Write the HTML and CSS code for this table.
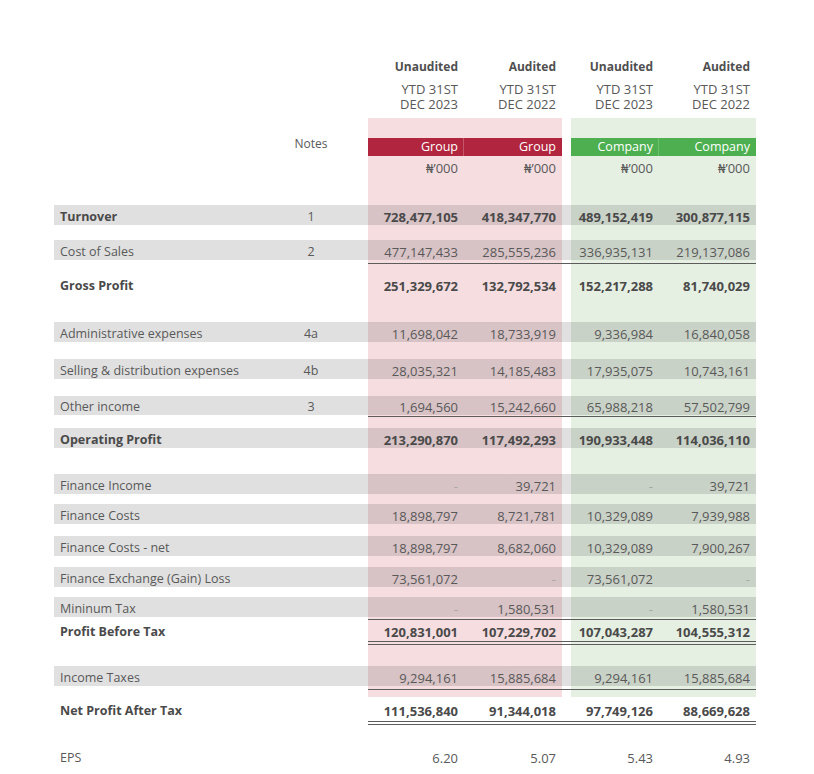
FILE: index.html
```html
<!DOCTYPE html>
<html lang="en">
<head>
<meta charset="utf-8">
<title>Statement of Profit or Loss</title>
<link rel="stylesheet" href="styles.css">
</head>
<body>
<main class="page">
<table class="fs">
  <colgroup>
    <col class="col-label"><col class="col-notes"><col class="col-n1"><col class="col-n2"><col class="col-gap"><col class="col-n3"><col class="col-n4">
  </colgroup>
  <thead>
    <tr class="h20 status"><th></th><th></th><th>Unaudited</th><th>Audited</th><th></th><th>Unaudited</th><th>Audited</th></tr>
    <tr class="h42 period"><th></th><th></th><th>YTD 31ST<br>DEC 2023</th><th>YTD 31ST<br>DEC 2022</th><th></th><th>YTD 31ST<br>DEC 2023</th><th>YTD 31ST<br>DEC 2022</th></tr>
    <tr class="h20"><th></th><th></th><th class="g"></th><th class="g"></th><th></th><th class="c"></th><th class="c"></th></tr>
    <tr class="h18 entity"><th></th><th class="notes-h">Notes</th><th class="bar-g sep">Group</th><th class="bar-g">Group</th><th></th><th class="bar-c sep">Company</th><th class="bar-c">Company</th></tr>
    <tr class="h24 unit"><th></th><th></th><th class="g">₦’000</th><th class="g">₦’000</th><th></th><th class="c">₦’000</th><th class="c">₦’000</th></tr>
  </thead>
  <tbody>
    <tr class="h25"><td></td><td></td><td class="g"></td><td class="g"></td><td></td><td class="c"></td><td class="c"></td></tr>
    <tr class="h20 row band total"><td class="lbl">Turnover</td><td class="note">1</td><td class="g">728,477,105</td><td class="g">418,347,770</td><td></td><td class="c">489,152,419</td><td class="c">300,877,115</td></tr>
    <tr class="h15"><td></td><td></td><td class="g"></td><td class="g"></td><td></td><td class="c"></td><td class="c"></td></tr>
    <tr class="h20 row band"><td class="lbl">Cost of Sales</td><td class="note">2</td><td class="g">477,147,433</td><td class="g">285,555,236</td><td></td><td class="c">336,935,131</td><td class="c">219,137,086</td></tr>
    <tr class="h3"><td></td><td></td><td class="g"></td><td class="g"></td><td></td><td class="c"></td><td class="c"></td></tr>
    <tr class="h1 line"><td></td><td></td><td></td><td></td><td></td><td></td><td></td></tr>
    <tr class="h40 row total"><td class="lbl">Gross Profit</td><td class="note"></td><td class="g">251,329,672</td><td class="g">132,792,534</td><td></td><td class="c">152,217,288</td><td class="c">81,740,029</td></tr>
    <tr class="h18"><td></td><td></td><td class="g"></td><td class="g"></td><td></td><td class="c"></td><td class="c"></td></tr>
    <tr class="h20 row band"><td class="lbl">Administrative expenses</td><td class="note">4a</td><td class="g">11,698,042</td><td class="g">18,733,919</td><td></td><td class="c">9,336,984</td><td class="c">16,840,058</td></tr>
    <tr class="h17"><td></td><td></td><td class="g"></td><td class="g"></td><td></td><td class="c"></td><td class="c"></td></tr>
    <tr class="h20 row band"><td class="lbl">Selling &amp; distribution expenses</td><td class="note">4b</td><td class="g">28,035,321</td><td class="g">14,185,483</td><td></td><td class="c">17,935,075</td><td class="c">10,743,161</td></tr>
    <tr class="h17"><td></td><td></td><td class="g"></td><td class="g"></td><td></td><td class="c"></td><td class="c"></td></tr>
    <tr class="h19 row band"><td class="lbl">Other income</td><td class="note">3</td><td class="g">1,694,560</td><td class="g">15,242,660</td><td></td><td class="c">65,988,218</td><td class="c">57,502,799</td></tr>
    <tr class="h1"><td></td><td></td><td class="g"></td><td class="g"></td><td></td><td class="c"></td><td class="c"></td></tr>
    <tr class="h1 line"><td></td><td></td><td></td><td></td><td></td><td></td><td></td></tr>
    <tr class="h11"><td></td><td></td><td class="g"></td><td class="g"></td><td></td><td class="c"></td><td class="c"></td></tr>
    <tr class="h20 row band total"><td class="lbl">Operating Profit</td><td class="note"></td><td class="g">213,290,870</td><td class="g">117,492,293</td><td></td><td class="c">190,933,448</td><td class="c">114,036,110</td></tr>
    <tr class="h26"><td></td><td></td><td class="g"></td><td class="g"></td><td></td><td class="c"></td><td class="c"></td></tr>
    <tr class="h20 row band"><td class="lbl">Finance Income</td><td class="note"></td><td class="g dash">-</td><td class="g">39,721</td><td></td><td class="c dash">-</td><td class="c">39,721</td></tr>
    <tr class="h10"><td></td><td></td><td class="g"></td><td class="g"></td><td></td><td class="c"></td><td class="c"></td></tr>
    <tr class="h20 row band"><td class="lbl">Finance Costs</td><td class="note"></td><td class="g">18,898,797</td><td class="g">8,721,781</td><td></td><td class="c">10,329,089</td><td class="c">7,939,988</td></tr>
    <tr class="h12"><td></td><td></td><td class="g"></td><td class="g"></td><td></td><td class="c"></td><td class="c"></td></tr>
    <tr class="h20 row band"><td class="lbl">Finance Costs - net</td><td class="note"></td><td class="g">18,898,797</td><td class="g">8,682,060</td><td></td><td class="c">10,329,089</td><td class="c">7,900,267</td></tr>
    <tr class="h11"><td></td><td></td><td class="g"></td><td class="g"></td><td></td><td class="c"></td><td class="c"></td></tr>
    <tr class="h20 row band"><td class="lbl">Finance Exchange (Gain) Loss</td><td class="note"></td><td class="g">73,561,072</td><td class="g dash">-</td><td></td><td class="c">73,561,072</td><td class="c dash">-</td></tr>
    <tr class="h10"><td></td><td></td><td class="g"></td><td class="g"></td><td></td><td class="c"></td><td class="c"></td></tr>
    <tr class="h20 row band"><td class="lbl">Mininum Tax</td><td class="note"></td><td class="g dash">-</td><td class="g">1,580,531</td><td></td><td class="c dash">-</td><td class="c">1,580,531</td></tr>
    <tr class="h2"><td></td><td></td><td class="g"></td><td class="g"></td><td></td><td class="c"></td><td class="c"></td></tr>
    <tr class="h1 line"><td></td><td></td><td></td><td></td><td></td><td></td><td></td></tr>
    <tr class="h21 row total"><td class="lbl">Profit Before Tax</td><td class="note"></td><td class="g">120,831,001</td><td class="g">107,229,702</td><td></td><td class="c">107,043,287</td><td class="c">104,555,312</td></tr>
    <tr class="h1 line"><td></td><td></td><td></td><td></td><td></td><td></td><td></td></tr>
    <tr class="h2"><td></td><td></td><td class="g"></td><td class="g"></td><td></td><td class="c"></td><td class="c"></td></tr>
    <tr class="h1 line"><td></td><td></td><td></td><td></td><td></td><td></td><td></td></tr>
    <tr class="h21"><td></td><td></td><td class="g"></td><td class="g"></td><td></td><td class="c"></td><td class="c"></td></tr>
    <tr class="h20 row band"><td class="lbl">Income Taxes</td><td class="note"></td><td class="g">9,294,161</td><td class="g">15,885,684</td><td></td><td class="c">9,294,161</td><td class="c">15,885,684</td></tr>
    <tr class="h3"><td></td><td></td><td class="g"></td><td class="g"></td><td></td><td class="c"></td><td class="c"></td></tr>
    <tr class="h1 line"><td></td><td></td><td></td><td></td><td></td><td></td><td></td></tr>
    <tr class="h7"><td></td><td></td><td class="g"></td><td class="g"></td><td></td><td class="c"></td><td class="c"></td></tr>
    <tr class="h24 row total"><td class="lbl">Net Profit After Tax</td><td class="note"></td><td>111,536,840</td><td>91,344,018</td><td></td><td>97,749,126</td><td>88,669,628</td></tr>
    <tr class="h1 line"><td></td><td></td><td></td><td></td><td></td><td></td><td></td></tr>
    <tr class="h2"><td></td><td></td><td></td><td></td><td></td><td></td><td></td></tr>
    <tr class="h1 line"><td></td><td></td><td></td><td></td><td></td><td></td><td></td></tr>
    <tr class="h21"><td></td><td></td><td></td><td></td><td></td><td></td><td></td></tr>
    <tr class="h20 row"><td class="lbl">EPS</td><td class="note"></td><td>6.20</td><td>5.07</td><td></td><td>5.43</td><td>4.93</td></tr>
  </tbody>
</table>
</main>
</body>
</html>
```

FILE: styles.css
```css
html, body {
  margin: 0;
  padding: 0;
  background: #ffffff;
}

body {
  font-family: "Open Sans", "Noto Sans", "DejaVu Sans", sans-serif;
  font-size: 13px;
  color: #595959;
}

.page {
  padding: 56px 0 0 54px;
}

.fs {
  --shade: rgba(0, 0, 0, 0.12);
  --pink: #f5dde0;
  --green: #e5efe2;
  --rule: #5c5c5c;
  table-layout: fixed;
  width: 702px;
  border-collapse: separate;
  border-spacing: 0;
}

.col-label { width: 210px; }
.col-notes { width: 104px; }
.col-n1 { width: 96px; }
.col-n2 { width: 98px; }
.col-gap { width: 9px; }
.col-n3 { width: 88px; }
.col-n4 { width: 97px; }

.fs th,
.fs td {
  padding: 0;
  line-height: 16px;
  vertical-align: middle;
  font-weight: 400;
  white-space: nowrap;
}

.fs th:nth-child(n+3),
.fs td:nth-child(n+3) {
  text-align: right;
  padding-right: 6px;
}

.fs td:nth-child(5),
.fs th:nth-child(5) {
  padding-right: 0;
}

.fs .row td {
  padding-top: 3px;
}

.h1 { height: 1px; }
.h2 { height: 2px; }
.h3 { height: 3px; }
.h7 { height: 7px; }
.h10 { height: 10px; }
.h11 { height: 11px; }
.h12 { height: 12px; }
.h15 { height: 15px; }
.h17 { height: 17px; }
.h18 { height: 18px; }
.h19 { height: 19px; }
.h20 { height: 20px; }
.h21 { height: 21px; }
.h24 { height: 24px; }
.h25 { height: 25px; }
.h26 { height: 26px; }
.h40 { height: 40px; }
.h42 { height: 42px; }

.g { background-color: var(--pink); }
.c { background-color: var(--green); }

.status th {
  font-weight: 700;
  font-size: 12px;
  color: #4f4f4f;
  padding-top: 2px;
}

.period th {
  line-height: 15px;
}

.notes-h {
  text-align: center;
  padding-right: 10px !important;
  vertical-align: top !important;
  line-height: 12px !important;
}

.entity th {
  color: #ffffff;
  font-size: 12.5px;
}

.entity th.notes-h {
  color: #595959;
  font-size: 12px;
}

.bar-g { background-color: #b1263e; }
.bar-c { background-color: #4daf4f; }

.bar-g.sep { box-shadow: inset -1px 0 0 #c4566a; }
.bar-c.sep { box-shadow: inset -1px 0 0 #6dbf6e; }

.lbl {
  padding-left: 6px !important;
  font-size: 12.5px;
}

.note {
  text-align: center;
  padding-right: 10px !important;
  font-size: 12.5px;
}

.band td {
  background-image: linear-gradient(var(--shade), var(--shade));
}

.total td {
  font-weight: 700;
  color: #4a4a4a;
}

.total td.note {
  font-weight: 400;
  color: #595959;
}

.dash {
  color: #a6a6a6;
}

.line td:nth-child(n+3) {
  background-color: var(--rule);
}
```
